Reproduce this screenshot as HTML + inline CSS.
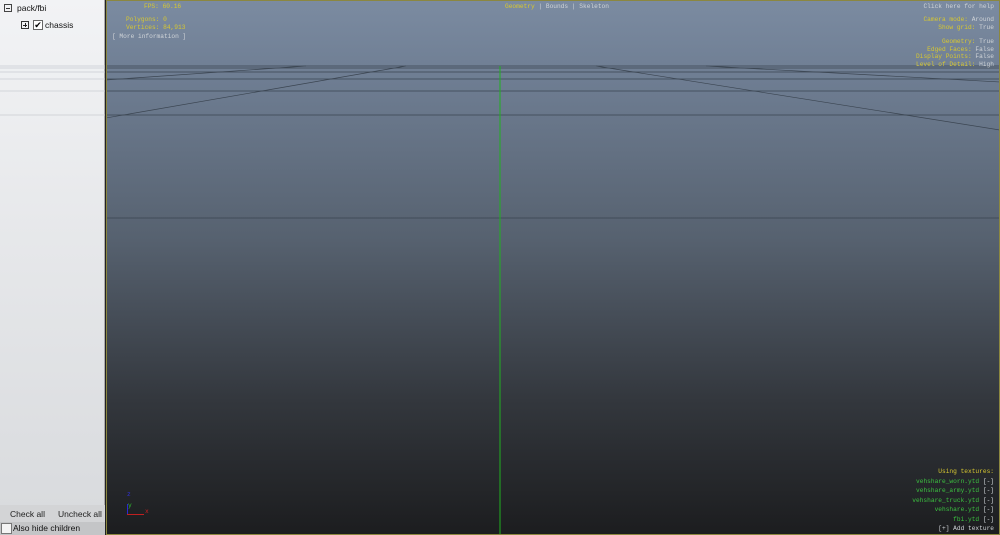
<!DOCTYPE html>
<html><head><style>
*{margin:0;padding:0;box-sizing:border-box}
body{width:1000px;height:535px;overflow:hidden;font-family:"Liberation Sans",sans-serif;position:relative;background:#222}
#left{position:absolute;left:0;top:0;width:105px;height:535px;background:linear-gradient(#f2f3f5,#d9dbde 95%);border-right:1px solid #aaa}
#vp{position:absolute;left:106px;top:0;width:894px;height:535px;background:linear-gradient(#7b8ba1 0%,#6e7d92 15%,#56616f 45%,#33373d 75%,#1c1d1f 100%);border:1px solid #8b8740;overflow:hidden}
.m{position:absolute;font-family:"Liberation Mono",monospace;font-size:6.2px;line-height:7.5px;white-space:pre}
.y{color:#d8c830}.w{color:#d0d4d8}.g{color:#3cc040}
</style></head><body>
<div id="left">
<svg width="105" height="130" style="position:absolute;left:0;top:0" stroke="#c8ccd2" stroke-width="0.7">
<line x1="0" y1="66" x2="105" y2="66"/><line x1="0" y1="68" x2="105" y2="68"/><line x1="0" y1="72" x2="105" y2="72"/><line x1="0" y1="79" x2="105" y2="79"/><line x1="0" y1="91" x2="105" y2="91"/><line x1="0" y1="115" x2="105" y2="115"/>
</svg>
<div style="position:absolute;left:4px;top:4px;width:8px;height:8px;border:1px solid #444"></div>
<div style="position:absolute;left:6px;top:8px;width:4px;height:1px;background:#333"></div>
<div style="position:absolute;left:17px;top:3px;font-size:8.5px;color:#111">pack/fbi</div>
<div style="position:absolute;left:21px;top:21px;width:8px;height:8px;border:1px solid #333"></div>
<div style="position:absolute;left:23px;top:24.5px;width:4px;height:1px;background:#222"></div>
<div style="position:absolute;left:24.5px;top:23px;width:1px;height:4px;background:#222"></div>
<div style="position:absolute;left:33px;top:20px;width:10px;height:10px;border:1px solid #666;background:#fff;font-size:9px;line-height:9px;text-align:center">✔</div>
<div style="position:absolute;left:45px;top:20px;font-size:8.5px;color:#111">chassis</div>
<div style="position:absolute;left:0;top:505px;width:105px;height:17px;background:#d3d4d6"></div>
<div style="position:absolute;left:10px;top:509px;font-size:8.5px;color:#222">Check all</div>
<div style="position:absolute;left:58px;top:509px;font-size:8.5px;color:#222">Uncheck all</div>
<div style="position:absolute;left:0;top:522px;width:105px;height:13px;background:#c4c5c7"></div>
<div style="position:absolute;left:1px;top:523px;width:11px;height:11px;border:1px solid #777;background:#f4f4f4"></div>
<div style="position:absolute;left:13px;top:523px;font-size:8.5px;color:#111">Also hide children</div>
</div>
<div id="vp">
<svg width="894" height="535" style="position:absolute;left:-1px;top:-1px" stroke-width="0.7">
<g stroke="#3a4450" fill="none">
<line x1="0" y1="66" x2="894" y2="66"/>
<line x1="0" y1="68" x2="894" y2="68"/>
<line x1="0" y1="72" x2="894" y2="72"/>
<line x1="0" y1="79" x2="894" y2="79"/>
<line x1="0" y1="91" x2="894" y2="91"/>
<line x1="0" y1="115" x2="894" y2="115"/>
<line x1="0" y1="218" x2="894" y2="218"/>
<line x1="300" y1="66" x2="0" y2="118"/>
<line x1="200" y1="66" x2="0" y2="80"/>
<line x1="490" y1="66" x2="894" y2="130"/>
<line x1="600" y1="66" x2="894" y2="82"/>
</g>
<line x1="394" y1="66" x2="394" y2="535" stroke="#20b020" stroke-width="1"/>
</svg>
<div class="m y" style="left:37px;top:2px">FPS: 60.16</div>
<div class="m y" style="left:19px;top:15px">Polygons: 0
Vertices: 84,913</div>
<div class="m w" style="left:5px;top:32px">[ More information ]</div>
<div class="m" style="left:398px;top:2px"><span class="y">Geometry</span><span class="w"> | Bounds | Skeleton</span></div>
<div class="m w" style="right:5px;top:2px;text-align:right">Click here for help</div>
<div class="m" style="right:5px;top:15px;text-align:right"><span class="y">Camera mode:</span><span class="w"> Around</span>
<span class="y">Show grid:</span><span class="w"> True</span></div>
<div class="m" style="right:5px;top:37px;text-align:right"><span class="y">Geometry:</span><span class="w"> True</span>
<span class="y">Edged Faces:</span><span class="w"> False</span>
<span class="y">Display Points:</span><span class="w"> False</span>
<span class="y">Level of Detail:</span><span class="w"> High</span></div>
<div class="m" style="right:5px;top:466px;text-align:right;line-height:9.5px"><span class="y">Using textures:</span>
<span class="g">vehshare_worn.ytd</span><span class="w"> [-]</span>
<span class="g">vehshare_army.ytd</span><span class="w"> [-]</span>
<span class="g">vehshare_truck.ytd</span><span class="w"> [-]</span>
<span class="g">vehshare.ytd</span><span class="w"> [-]</span>
<span class="g">fbi.ytd</span><span class="w"> [-]</span>
<span class="w">[+] Add texture</span></div>
<div style="position:absolute;left:20px;top:503px;width:1px;height:11px;background:#2a2ad0"></div>
<div style="position:absolute;left:20px;top:513px;width:17px;height:1px;background:#c02020"></div>
<div class="m" style="left:20px;top:490px;color:#3030e0">z</div>
<div class="m" style="left:21px;top:501px;color:#30c030">y</div>
<div class="m" style="left:38px;top:507px;color:#d02020">x</div>
</div>
</body></html>
